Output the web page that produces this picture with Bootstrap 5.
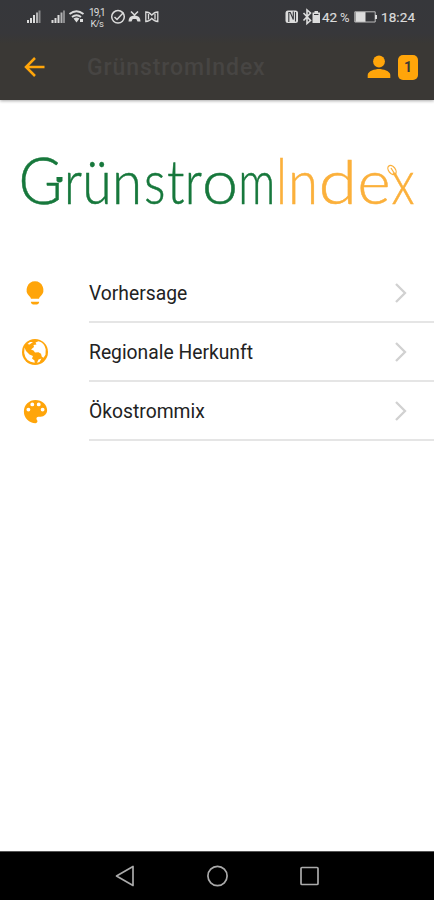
<!DOCTYPE html>
<html lang="de">
<head>
<meta charset="utf-8">
<meta name="viewport" content="width=device-width, initial-scale=1">
<title>GrünstromIndex</title>
<link href="https://cdn.jsdelivr.net/npm/bootstrap@5.3.0/dist/css/bootstrap.min.css" rel="stylesheet">
<style>
body{font-family:Roboto,"Liberation Sans",sans-serif;color:#222;height:900px;overflow:hidden}
svg{display:block;flex:none}
.topbar{height:100px;background:linear-gradient(#36373b 0,#37373a 34px,#3a3835 44px,#3a3835 100%);box-shadow:0 1px 3px #0005}
.status{height:34px}
.tools{height:66px;color:#ffa50a}
.title{font-size:23px;font-weight:500;letter-spacing:.9px;color:#474543;line-height:66px;margin-left:37px;padding-top:2px}
.count{width:20px;height:25px;border-radius:5px;background:#ffa50a;color:#3a3835;font-size:14px;font-weight:700;margin-left:7px}
.logo{height:164px}
.logo text{font-family:Lato,sans-serif;font-weight:300;font-size:62px;stroke-width:.5px}
.logo .tall{font-size:66px}
.green{fill:#17783c;stroke:#17783c}
.amber{fill:#fbb03b;stroke:#fbb03b}
.entry{height:59px;padding-left:21px;color:#222;font-size:19.3px}
.entry:hover{color:#222}
.entry-icon{color:#ffa50a;width:28px;padding-bottom:1px}
.entry-body{margin-left:40px;height:59px;padding-right:26px;border-bottom:2px solid #e5e5e5}
.entry-body span{padding-top:3px}
.navkeys{height:49px;background:#000;border-top:1px solid #555}
</style>
</head>
<body class="d-flex flex-column bg-white">
<header class="topbar flex-shrink-0">
  <div class="status">
    <svg width="434" height="34" viewBox="0 0 434 34" fill="#dcdcdc" font-family="Roboto,sans-serif">
      <g id="signal"><path d="M27 20h2v3h-2zM30 18h2v5h-2z"/><path d="M33 15h2v8h-2z"/><path d="M36 12.500h2v10.500h-2z" opacity=".75"/><path d="M38.500 10.500h2v12.500h-2z" opacity=".5"/></g>
      <use href="#signal" x="24.500"/>
      <g fill="none" stroke="#dcdcdc" stroke-width="1.900"><path d="M69.500 14q7-5.500 14 0M72 17q4.500-3.500 9 0"/></g><path d="M73.500 18.500q3-2 6 0l-3 4zM80 19h3v3h-3z"/>
      <text x="89" y="15.500" font-size="10" textLength="16.500">19,1</text><text x="90.500" y="26.500" font-size="9.500" textLength="13.500">K/s</text>
      <g fill="none" stroke="#dcdcdc" stroke-width="1.500"><circle cx="118" cy="16.800" r="6.300"/><path d="M114.500 17l2.500 2.500 6.500-7"/><path d="M131 11.500l3.500 3.500 3.500-3.500M134.500 14v3"/><path d="M145.800 12q3.500 0 6 3.200 2.500-3.200 6-3.200v9.500q-3.500 0-6-3.200-2.500 3.200-6 3.200zM148.500 14v5.500M155 14v5.500" stroke-width="1.300"/></g>
      <path d="M128.500 21.500q0-6 6-6t6 6h-3l-1.200-2.500h-3.600l-1.200 2.500z"/>
      <rect x="285.500" y="10.500" width="12.500" height="12.500" rx="2.500"/><path d="M288.800 22v-9.500l1.500 0 3 7V11.500M295.500 12v9.500" fill="none" stroke="#36373b" stroke-width="1.100"/>
      <path d="M303.500 13l7 7.500-3.500 3V10l3.500 3-7 7.500" fill="none" stroke="#dcdcdc" stroke-width="1.600"/>
      <path d="M312.500 12.500h2V11h3.500v1.500h2V23h-7.500z"/><path d="M314 14h4.500v1h-4.500z" fill="#36373b"/>
      <text x="322" y="21.500" font-size="13.500" stroke="#dcdcdc" stroke-width=".2" textLength="15">42</text><text x="340" y="21.500" font-size="13" textLength="10">%</text>
      <path d="M355.500 12h10v10h-10z"/><path d="M354.800 11.800h20.400v10.200h-20.400z" fill="none" stroke="#bbb"/><path d="M375 15h2v4h-2z"/>
      <text x="381" y="21.500" font-size="13.500" stroke="#dcdcdc" stroke-width=".2" textLength="34">18:24</text>
    </svg>
  </div>
  <div class="tools d-flex align-items-center">
    <svg class="ms-4" width="26" height="26" viewBox="0 0 26 26" fill="none" stroke="currentColor" stroke-width="2.500"><path d="M20.500 13H2.500M11 4L2 13l9 9"/></svg>
    <div class="title">GrünstromIndex</div>
    <svg class="ms-auto" width="24" height="24" viewBox="0 0 24 24" fill="currentColor"><circle cx="12" cy="6.500" r="5.900"/><path d="M.700 23v-3c0-4 7.500-6 11.300-6s11.300 2 11.300 6v3z"/></svg>
    <div class="count d-flex align-items-center justify-content-center me-3">1</div>
  </div>
</header>
<main class="flex-grow-1">
  <div class="logo">
    <svg width="434" height="164" viewBox="0 100 434 164">
      <text y="203.800" class="green"><tspan class="tall" x="18.500" textLength="44" lengthAdjust="spacingAndGlyphs">G</tspan><tspan x="64" textLength="18" lengthAdjust="spacingAndGlyphs">r</tspan><tspan x="82.200" textLength="29.500" lengthAdjust="spacingAndGlyphs">ü</tspan><tspan x="112" textLength="30" lengthAdjust="spacingAndGlyphs">n</tspan><tspan x="144" textLength="21.500" lengthAdjust="spacingAndGlyphs">s</tspan><tspan x="167" textLength="17.500" lengthAdjust="spacingAndGlyphs">t</tspan><tspan x="185" textLength="17" lengthAdjust="spacingAndGlyphs">r</tspan><tspan x="202" textLength="36" lengthAdjust="spacingAndGlyphs">o</tspan><tspan x="238.300" textLength="37" lengthAdjust="spacingAndGlyphs">m</tspan></text>
      <text y="203.800" class="amber"><tspan class="tall" x="275.500" textLength="12" lengthAdjust="spacingAndGlyphs">I</tspan><tspan x="288" textLength="30" lengthAdjust="spacingAndGlyphs">n</tspan><tspan x="318.500" textLength="38.500" lengthAdjust="spacingAndGlyphs">d</tspan><tspan x="357.500" textLength="33" lengthAdjust="spacingAndGlyphs">e</tspan><tspan x="391.500" textLength="23" lengthAdjust="spacingAndGlyphs">x</tspan></text>
      <path d="M56.500 177h6v4q-3 3-6 0z" fill="#17783c"/>
      <g fill="none" stroke="#fbb03b" stroke-width="1.300"><ellipse cx="392" cy="170" rx="3.300" ry="5.200" transform="rotate(-38 392 170)"/><path d="M391 168l5 8"/></g>
    </svg>
  </div>
  <nav>
    <a class="entry d-flex align-items-center text-decoration-none" href="#">
      <span class="entry-icon d-flex justify-content-center"><svg width="28" height="28" viewBox="0 0 24 24" fill="currentColor"><path d="M12 2a7.300 7.300 0 0 0-5 12.500c1 .9 1.500 1.500 1.500 2.500h7c0-1 .500-1.600 1.500-2.500A7.300 7.300 0 0 0 12 2zM8.500 19.500h7v.700q-.500 1.600-2 1.600h-3q-1.500 0-2-1.600z"/></svg></span>
      <span class="entry-body flex-grow-1 d-flex align-items-center justify-content-between"><span>Vorhersage</span><svg width="14" height="22" viewBox="0 0 14 22" fill="none" stroke="#d1d1d1" stroke-width="2.300"><path d="M2 2l9 9-9 9"/></svg></span>
    </a>
    <a class="entry d-flex align-items-center text-decoration-none" href="#">
      <span class="entry-icon d-flex justify-content-center"><svg width="26" height="26" viewBox="0 0 26 26"><circle cx="13" cy="13" r="13" fill="currentColor"/><path d="M13.500 3.500l3-1.300q6 1.500 7.200 8l-.2 5.500-2 3-1.700-1-.8-3-2.500-1.500-3.500.3-1.500-2-2.500-1 3-2.500-.5-2 3-.5zM5.500 5l2.500-2 3 0-3.500 2.500zM2.500 8.500l1.500 3.500 3.500 3.500 3.500 1.500-1 2.500 2.500 2 .2 2.200Q3.500 23 2.200 14zM16.500 20.500l3-1-2 3.500-2.500.8z" fill="#fff"/></svg></span>
      <span class="entry-body flex-grow-1 d-flex align-items-center justify-content-between"><span>Regionale Herkunft</span><svg width="14" height="22" viewBox="0 0 14 22" fill="none" stroke="#d1d1d1" stroke-width="2.300"><path d="M2 2l9 9-9 9"/></svg></span>
    </a>
    <a class="entry d-flex align-items-center text-decoration-none" href="#">
      <span class="entry-icon d-flex justify-content-center"><svg width="31" height="31" viewBox="0 0 24 24" fill="currentColor"><path d="M12 3a9 9 0 0 0 0 18c.83 0 1.500-.67 1.500-1.500 0-.39-.15-.74-.39-1.010-.23-.26-.38-.61-.38-.99 0-.83.67-1.500 1.500-1.500H16c2.760 0 5-2.240 5-5 0-4.420-4.030-8-9-8zm-5.500 9a1.500 1.500 0 1 1 0-3 1.500 1.500 0 0 1 0 3zm3-4a1.500 1.500 0 1 1 0-3 1.500 1.500 0 0 1 0 3zm5 0a1.500 1.500 0 1 1 0-3 1.500 1.500 0 0 1 0 3zm3 4a1.500 1.500 0 1 1 0-3 1.500 1.500 0 0 1 0 3z"/></svg></span>
      <span class="entry-body flex-grow-1 d-flex align-items-center justify-content-between"><span>Ökostrommix</span><svg width="14" height="22" viewBox="0 0 14 22" fill="none" stroke="#d1d1d1" stroke-width="2.300"><path d="M2 2l9 9-9 9"/></svg></span>
    </a>
  </nav>
</main>
<footer class="navkeys flex-shrink-0">
  <svg width="434" height="48" viewBox="0 852 434 48" fill="none" stroke="#aaa" stroke-width="1.700" stroke-linejoin="round"><path d="M133 866.500v19L116.500 876z"/><circle cx="217.500" cy="876" r="9.600"/><rect x="301" y="867.500" width="17" height="17" rx="1"/></svg>
</footer>
<script src="https://cdn.jsdelivr.net/npm/bootstrap@5.3.0/dist/js/bootstrap.bundle.min.js"></script>
</body>
</html>
